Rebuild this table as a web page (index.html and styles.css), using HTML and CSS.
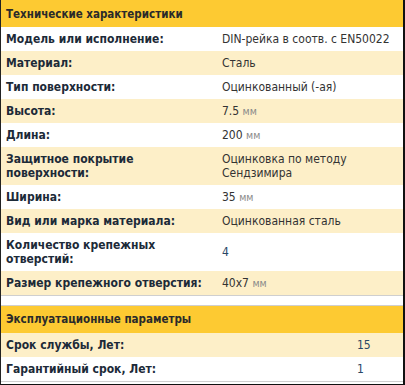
FILE: index.html
```html
<!DOCTYPE html>
<html lang="ru">
<head>
<meta charset="utf-8">
<link rel="stylesheet" href="styles.css">
</head>
<body>
<div class="frame">
  <table class="specs specs-main">
    <colgroup><col class="col-label"><col class="col-value"></colgroup>
    <thead>
      <tr><th colspan="2">Технические характеристики</th></tr>
    </thead>
    <tbody>
      <tr><td class="label">Модель или исполнение:</td><td class="value">DIN-рейка в соотв. с EN50022</td></tr>
      <tr><td class="label">Материал:</td><td class="value">Сталь</td></tr>
      <tr><td class="label">Тип поверхности:</td><td class="value">Оцинкованный (-ая)</td></tr>
      <tr><td class="label">Высота:</td><td class="value">7.5 <span class="unit">мм</span></td></tr>
      <tr><td class="label">Длина:</td><td class="value">200 <span class="unit">мм</span></td></tr>
      <tr><td class="label">Защитное покрытие поверхности:</td><td class="value">Оцинковка по методу Сендзимира</td></tr>
      <tr><td class="label">Ширина:</td><td class="value">35 <span class="unit">мм</span></td></tr>
      <tr><td class="label">Вид или марка материала:</td><td class="value">Оцинкованная сталь</td></tr>
      <tr><td class="label">Количество крепежных отверстий:</td><td class="value num">4</td></tr>
      <tr><td class="label">Размер крепежного отверстия:</td><td class="value">40x7 <span class="unit">мм</span></td></tr>
    </tbody>
  </table>
  <table class="specs specs-ops">
    <colgroup><col class="col-label"><col class="col-value"></colgroup>
    <thead>
      <tr><th colspan="2">Эксплуатационные параметры</th></tr>
    </thead>
    <tbody>
      <tr><td class="label">Срок службы, Лет:</td><td class="value num">15</td></tr>
      <tr><td class="label">Гарантийный срок, Лет:</td><td class="value num">1</td></tr>
    </tbody>
  </table>
</div>
</body>
</html>
```

FILE: styles.css
```css
html, body {
  margin: 0;
  padding: 0;
  background: #fff;
}

.frame {
  box-sizing: border-box;
  width: 405px;
  height: 385px;
  border-left: 1px solid #222;
  border-right: 2px solid #111;
  border-bottom: 1px solid #111;
  background: #fff;
  font-family: "DejaVu Sans Condensed", "DejaVu Sans", Verdana, sans-serif;
  font-stretch: condensed;
}

.specs {
  width: 100%;
  border-collapse: collapse;
  border-bottom: 1px solid #cfcfcf;
  table-layout: fixed;
}

.specs-main .col-label {
  width: 216px;
}

.specs-ops .col-label {
  width: 351px;
}

.specs-ops {
  margin-top: 9px;
  border-top: 1px solid #cfcfcf;
}

.specs th {
  background: #fdca32;
  color: #2a2a2a;
  font-size: 11.5px;
  font-weight: bold;
  text-align: left;
  height: 27px;
  box-sizing: border-box;
  padding: 0 5px;
  line-height: 14px;
}

.specs td {
  padding: 5px 2px 5px 5px;
  line-height: 14px;
  vertical-align: middle;
}

.specs tbody tr:nth-child(odd) td {
  background: #fff;
}

.specs tbody tr:nth-child(even) td {
  background: #fdefc8;
}

.specs-ops tbody tr:nth-child(odd) td {
  background: #fdefc8;
}

.specs-ops tbody tr:nth-child(even) td {
  background: #fff;
}

.label {
  font-size: 12px;
  font-weight: bold;
  color: #1c2a38;
}

.value {
  font-size: 12px;
  color: #333;
}

.value.num {
  color: #2a4765;
}

.unit {
  color: #8a8a8a;
  font-size: 10.5px;
}
```
